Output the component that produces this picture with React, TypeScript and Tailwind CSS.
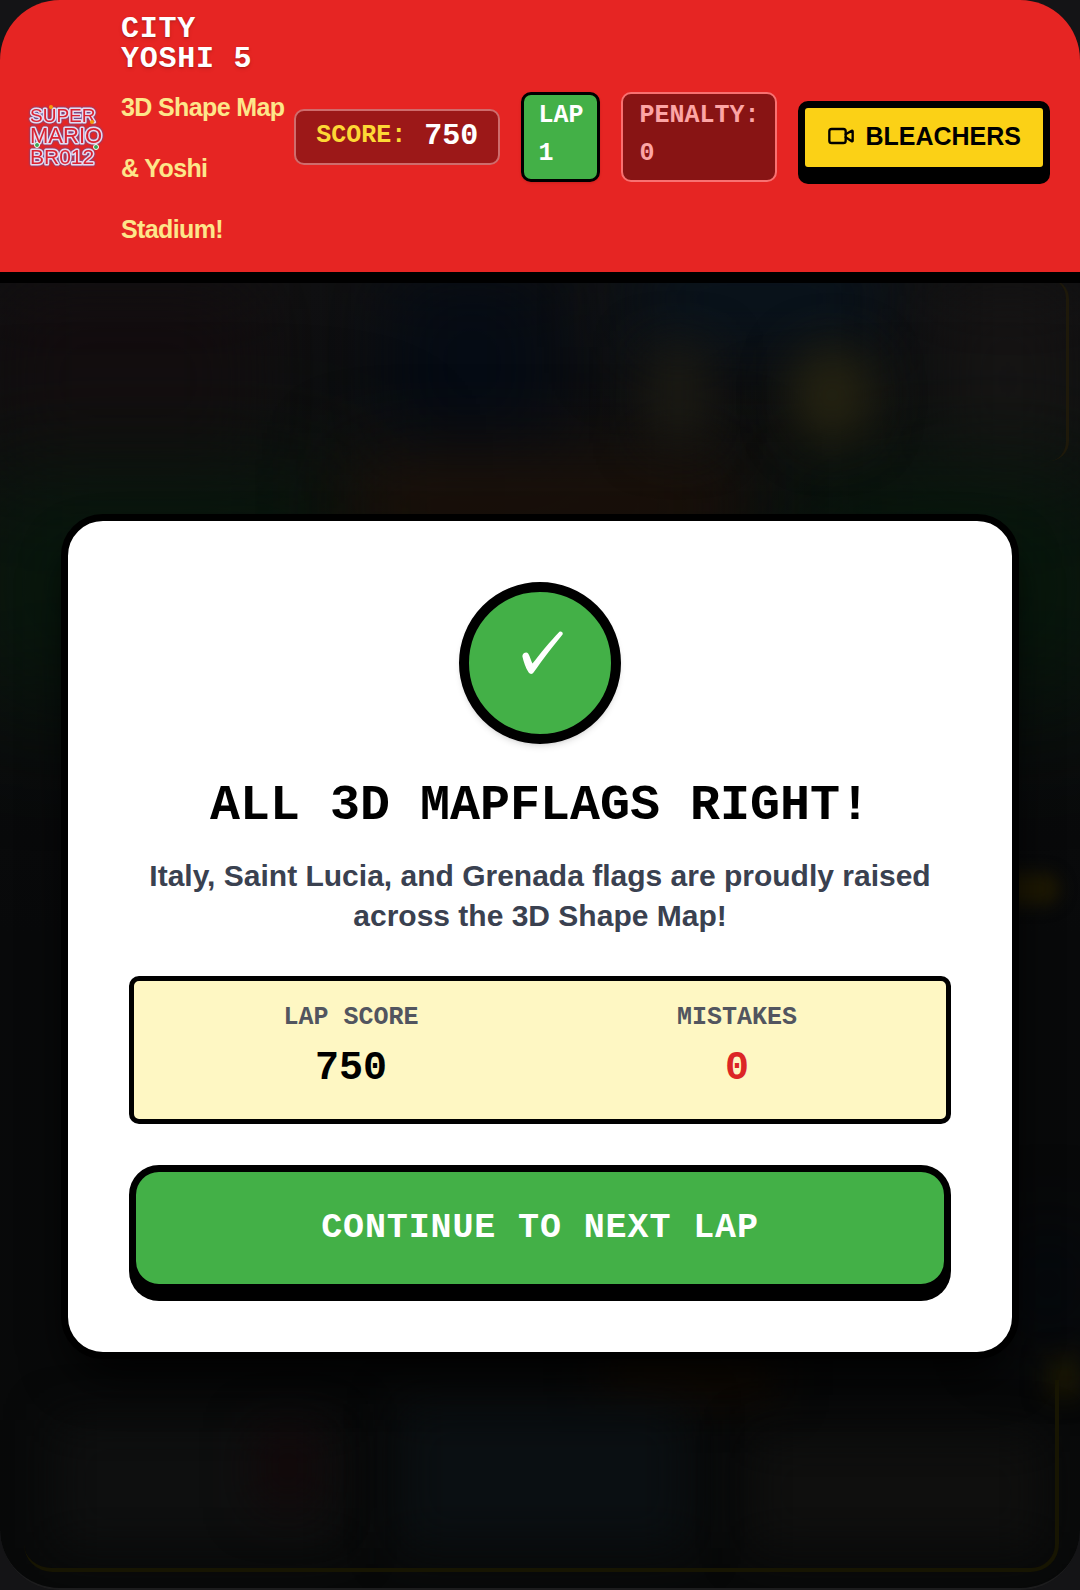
import React from 'react';
import { Video } from 'lucide-react';

const LOGO_LINES = [
  { text: 'SUPER', y: 19, size: 19 },
  { text: 'MARIO', y: 40, size: 22 },
  { text: 'BR012', y: 61, size: 21 },
];

const Logo: React.FC = () => (
  <svg viewBox="0 0 71 68" className="h-[68px] w-[71px] shrink-0 overflow-visible" role="img" aria-label="Logo">
    <g
      className="drop-shadow-[0_0_1px_#2f5fc4]"
      fill="#d92332"
      stroke="#e6dcf0"
      strokeWidth="3"
      strokeLinejoin="round"
      paintOrder="stroke"
      fontFamily="Liberation Sans, sans-serif"
    >
      {LOGO_LINES.map((line) => (
        <text key={line.text} x="0" y={line.y} fontSize={line.size}>
          {line.text}
        </text>
      ))}
    </g>
    <circle cx="21" cy="4" r="2" fill="#f59e0b" />
    <circle cx="62" cy="19" r="2" fill="#f59e0b" />
    <circle cx="7" cy="42" r="2.5" fill="#3aa655" stroke="#ffffff" />
    <circle cx="66" cy="44" r="2.5" fill="#3aa655" stroke="#ffffff" />
  </svg>
);

const Header: React.FC = () => (
  <header className="flex items-center border-b-[11px] border-black bg-[#e62523] px-[30px] pt-[14px] pb-3">
    <Logo />
    <div className="ml-5 min-w-0 flex-1">
      <h1 className="mb-[3px] font-['Liberation_Mono',monospace] text-[30px] leading-[30px] font-bold tracking-wide text-white text-shadow-md">
        CITY YOSHI 5
      </h1>
      <p className="text-[25px] leading-[61px] font-bold tracking-tight text-[#fde68a]">3D Shape Map &amp; Yoshi Stadium!</p>
    </div>

    <div className="flex shrink-0 items-center gap-[21px] font-['Liberation_Mono',monospace] text-[25px] leading-[38px] font-bold">
      <div className="flex items-center gap-[18px] rounded-[10px] border-2 border-[#cf6c6c] bg-[#9c1818] px-5 pt-1.5 pb-2">
        <span className="text-[#fdd835]">SCORE:</span>
        <span className="text-[30px] text-white">750</span>
      </div>
      <div className="rounded-[10px] border-[3px] border-black bg-[#43b047] px-[14px] pt-0.5 pb-1.5 text-white shadow-sm">
        <div>LAP</div>
        <div>1</div>
      </div>
      <div className="rounded-[10px] border-2 border-[#f87171] bg-[#881414] px-4 pt-[3px] pb-[7px] text-[#fca5a5]">
        <div>PENALTY:</div>
        <div>0</div>
      </div>
      <button
        type="button"
        className="flex items-center gap-2.5 rounded-[10px] border-[7px] border-black bg-[#fbd116] px-[22px] pt-[9px] pb-3 font-['Liberation_Sans',sans-serif] text-black shadow-[0_10px_0_#000]"
      >
        <Video size={28} strokeWidth={2} />
        BLEACHERS
      </button>
    </div>
  </header>
);

// Dimmed game board showing through behind the dialog
const Backdrop: React.FC = () => (
  <div aria-hidden="true" className="pointer-events-none absolute inset-0 overflow-hidden rounded-b-[60px] border-b-2 border-[#1c1c1d] bg-linear-to-b from-[#101011] via-[#08090a] via-50% to-[#080909]">
    <div className="absolute top-0 left-0 h-48 w-64 bg-[#130d0f] blur-2xl"></div>
    <div className="absolute -top-4 left-96 h-48 w-44 bg-[#050b14] blur-2xl"></div>
    <div className="absolute -top-8 right-48 h-24 w-64 bg-[#08131d] blur-2xl"></div>
    <div className="absolute top-0 right-0 h-48 w-36 bg-[#161414] blur-2xl"></div>
    <div className="absolute top-48 -left-8 h-56 w-96 bg-[#08190d] blur-3xl"></div>
    <div className="absolute top-48 -right-8 h-56 w-80 bg-[#07190c] blur-3xl"></div>
    <div className="absolute top-44 left-[350px] h-24 w-96 bg-[#1c1109] blur-2xl"></div>
    <div className="absolute top-16 right-[370px] h-24 w-16 bg-[#1b1a13] blur-xl"></div>
    <div className="absolute top-16 right-52 h-24 w-20 rounded-full bg-[#252311] blur-xl"></div>
    <div className="absolute top-[590px] right-5 h-8 w-20 rounded-full bg-[#1d1803] blur-sm"></div>
    <div className="absolute right-0 bottom-48 h-10 w-8 bg-[#1c1803] blur-md"></div>
    <div className="absolute right-0 bottom-64 h-24 w-16 bg-[#04080f] blur-2xl"></div>
    <div className="absolute bottom-48 left-[600px] h-12 w-44 bg-[#140b02] blur-xl"></div>
    <div className="absolute bottom-10 left-14 h-32 w-72 bg-[#0e0f0f] blur-xl"></div>
    <div className="absolute bottom-20 left-64 h-20 w-16 bg-[#12080a] blur-xl"></div>
    <div className="absolute bottom-10 left-[400px] h-36 w-72 bg-[#0a0f12] blur-xl"></div>
    <div className="absolute right-10 bottom-10 h-28 w-72 bg-[#0f0f0e] blur-xl"></div>
    <div className="absolute -top-1 right-[11px] h-[182px] w-10 rounded-r-[20px] border-r-3 border-[#1e190a]"></div>
    <div className="absolute right-[21px] bottom-4 left-6 h-48 rounded-b-[28px] border-r-4 border-b-4 border-[#171502]"></div>
  </div>
);

const LapDialog: React.FC = () => (
  <div
    role="dialog"
    aria-labelledby="lap-title"
    className="relative w-full rounded-[42px] border-[7px] border-black bg-white p-[61px] text-center shadow-2xl shadow-black"
  >
    <div className="mx-auto mb-8 flex size-[162px] items-center justify-center rounded-full border-[10px] border-black bg-[#43b047] shadow-md">
      <svg viewBox="0 0 44 46" className="mb-5 ml-1.5 h-[44px] w-[42px]" fill="#ffffff" aria-hidden="true">
        <path d="M.5 27C0 24.500 2 22.500 4.500 22.500C7.500 22.500 8.500 29 11 34C18 25 30 10 39 .900C40.500 -.3 43.500 1 42.500 3.500C34 14 22 29 12.500 43C11 45.500 8.500 45.500 7 43.500C4 39 1.500 32 .5 27Z" />
      </svg>
    </div>

    <h2 id="lap-title" className="mb-5 font-['Liberation_Mono',monospace] text-[50px] leading-[60px] font-bold text-black">
      ALL 3D MAPFLAGS RIGHT!
    </h2>
    <p className="mb-10 text-[30px] leading-10 font-bold text-[#3a4150]">
      Italy, Saint Lucia, and Grenada flags are proudly raised across the 3D Shape Map!
    </p>

    <dl className="mb-[41px] grid grid-cols-2 rounded-[10px] border-[5px] border-black bg-[#fef7c3] pt-5 pr-4 pb-[17px] pl-6 font-['Liberation_Mono',monospace] font-bold">
      <div>
        <dt className="text-[25px] leading-[34px] text-[#52555f]">LAP SCORE</dt>
        <dd className="text-[40px] leading-[67px] text-black">750</dd>
      </div>
      <div>
        <dt className="text-[25px] leading-[34px] text-[#52555f]">MISTAKES</dt>
        <dd className="text-[40px] leading-[67px] text-[#dc2626]">0</dd>
      </div>
    </dl>

    <button
      type="button"
      className="w-full rounded-[30px] border-[7px] border-black bg-[#43b047] py-[30px] font-['Liberation_Mono',monospace] text-[35px] leading-[52px] font-bold tracking-wide text-white shadow-[0_10px_0_#000]"
    >
      CONTINUE TO NEXT LAP
    </button>
  </div>
);

const App: React.FC = () => (
  <div className="min-h-screen bg-[#141416] font-['Liberation_Sans',sans-serif]">
    <div className="flex min-h-screen flex-col overflow-hidden rounded-[60px]">
      <Header />
      <main className="relative flex flex-1 items-center px-[61px]">
        <Backdrop />
        <LapDialog />
      </main>
    </div>
  </div>
);

export default App;
